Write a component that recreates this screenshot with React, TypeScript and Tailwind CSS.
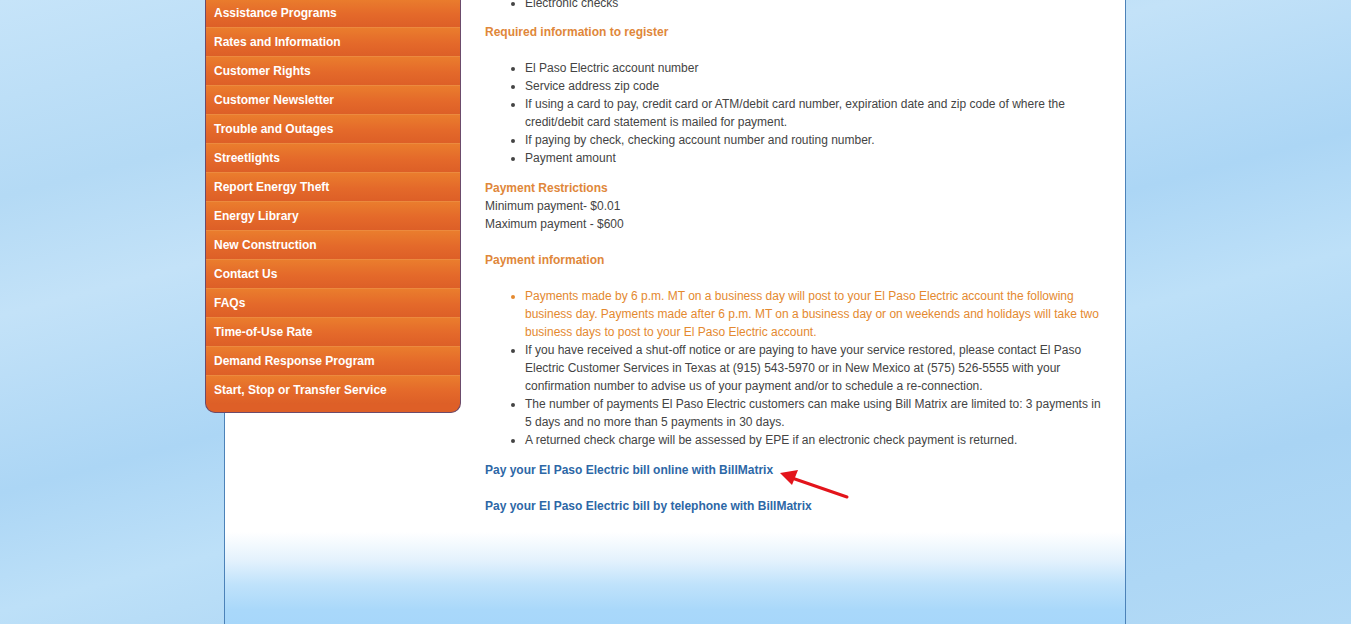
import React from "react";

const menu = [
  "Assistance Programs",
  "Rates and Information",
  "Customer Rights",
  "Customer Newsletter",
  "Trouble and Outages",
  "Streetlights",
  "Report Energy Theft",
  "Energy Library",
  "New Construction",
  "Contact Us",
  "FAQs",
  "Time-of-Use Rate",
  "Demand Response Program",
  "Start, Stop or Transfer Service",
];

export default function App() {
  return (
    <div
      className="min-h-[624px] w-full overflow-hidden bg-[#b6dcf6] bg-[linear-gradient(165deg,#c6e4f9_0%,#b4daf5_20%,#c3e2f8_32%,#acd6f5_50%,#bde0f8_62%,#a9d4f4_80%,#b3daf6_100%)] pr-[1px]"
      style={{ fontFamily: '"Liberation Sans", Arial, sans-serif' }}
    >
      <div className="mx-auto flex h-[624px] w-[902px] border-x border-[#4c82b8] bg-[linear-gradient(to_bottom,#ffffff_532px,#e4f2fd_560px,#bfe2fb_585px,#a9d8fa_610px,#a7d7fa_624px)]">
        <div className="ml-[-20px] mt-[-2px] w-[256px] shrink-0 self-start overflow-hidden rounded-b-[10px] border border-t-0 border-[#6b4b6c] bg-[#de5f27] pb-[8px]">
          {menu.map((m) => (
            <div
              key={m}
              className="flex h-[29px] items-center border-t border-[#ec8a3e] bg-[linear-gradient(to_bottom,#ea7d2d,#e4692a_55%,#dd5f27)] pl-[8px] text-[12px] font-bold text-white"
            >
              {m}
            </div>
          ))}
        </div>
        <div className="relative ml-[24px] mt-[-6px] w-[620px] text-[12px] leading-[18px] text-[#444444]">
          <ul className="list-disc pl-[40px]">
            <li>Electronic checks</li>
          </ul>
          <p className="mt-[11px] font-bold text-[#e0873a]">Required information to register</p>
          <ul className="mt-[18px] list-disc pl-[40px]">
            <li>El Paso Electric account number</li>
            <li>Service address zip code</li>
            <li>
              If using a card to pay, credit card or ATM/debit card number, expiration date and zip code of where the
              credit/debit card statement is mailed for payment.
            </li>
            <li>If paying by check, checking account number and routing number.</li>
            <li>Payment amount</li>
          </ul>
          <p className="mt-[12px] font-bold text-[#e0873a]">Payment Restrictions</p>
          <p>Minimum payment- $0.01</p>
          <p>Maximum payment - $600</p>
          <p className="mt-[18px] font-bold text-[#e0873a]">Payment information</p>
          <ul className="mt-[18px] list-disc pl-[40px]">
            <li className="text-[#e4892f]">
              Payments made by 6 p.m. MT on a business day will post to your El Paso Electric account the following
              business day. Payments made after 6 p.m. MT on a business day or on weekends and holidays will take two
              business days to post to your El Paso Electric account.
            </li>
            <li>
              If you have received a shut-off notice or are paying to have your service restored, please contact El Paso
              Electric Customer Services in Texas at (915) 543-5970 or in New Mexico at (575) 526-5555 with your
              confirmation number to advise us of your payment and/or to schedule a re-connection.
            </li>
            <li>
              The number of payments El Paso Electric customers can make using Bill Matrix are limited to: 3 payments in
              5 days and no more than 5 payments in 30 days.
            </li>
            <li>A returned check charge will be assessed by EPE if an electronic check payment is returned.</li>
          </ul>
          <p className="mt-[12px] font-bold text-[#2d67a6]">Pay your El Paso Electric bill online with BillMatrix</p>
          <p className="mt-[18px] font-bold text-[#2d67a6]">Pay your El Paso Electric bill by telephone with BillMatrix</p>
          <svg
            className="absolute left-[289px] top-[474px]"
            width="80"
            height="40"
            viewBox="0 0 80 40"
          >
            <line x1="73" y1="29" x2="18" y2="10" stroke="#e3141b" strokeWidth="3" strokeLinecap="round" />
            <polygon points="6,5 24,2 18,17" fill="#e3141b" />
          </svg>
        </div>
      </div>
    </div>
  );
}
